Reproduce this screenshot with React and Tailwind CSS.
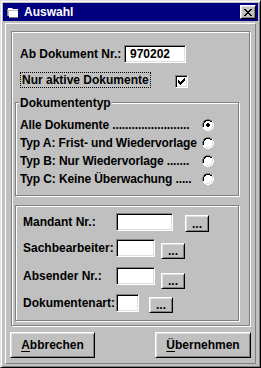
import React from "react";

const etched = "border border-[#808080] shadow-[inset_1px_1px_0_#fff,1px_1px_0_#fff]";
const sunken =
  "bg-white border border-t-[#808080] border-l-[#808080] border-b-white border-r-white shadow-[inset_1px_1px_0_#000,inset_-1px_-1px_0_#dfdfdf]";
const raised =
  "bg-[#c0c0c0] border border-t-white border-l-white border-b-black border-r-black shadow-[inset_1px_1px_0_#dfdfdf,inset_-1px_-1px_0_#808080]";

function Radio({ checked }) {
  return (
    <svg width="12" height="12" viewBox="0 0 12 12" className="block">
      <path d="M4 0h4v1h2v1h1v2h1v4h-1v2h-1v1h-2v1h-4v-1h-2v-1h-1v-2h-1v-4h1v-2h1v-1h2z" fill="#fff" />
      <path d="M4 0h4v1h2v1h-2v-1h-4v1h-2v2h-1v4h-1v-4h1v-2h1v-1h2z" fill="#808080" />
      <path d="M4 1h4v1h2v1h-2v-1h-4v1h-1v1h-1v4h-1v-4h1v-2h1v-1h1z" fill="#000" />
      <path d="M10 3h1v5h-1v2h-2v1h-4v-1h4v-1h1v-1h1z" fill="#dfdfdf" />
      <path d="M11 4h1v4h-1v2h-1v1h-2v1h-4v-1h4v-1h2v-2h1z" fill="#fff" />
      {checked && <path d="M5 4h2v1h1v2h-1v1h-2v-1h-1v-2h1z" fill="#000" />}
    </svg>
  );
}

function Dots({ className = "" }) {
  return (
    <div className={`${raised} w-[24px] flex items-end justify-center leading-[12px] pb-[1px] ${className}`}>
      <span className="-mt-[4px]">...</span>
    </div>
  );
}

export default function App() {
  return (
    <div className="w-[261px] h-[368px] bg-[#c0c0c0] border border-t-[#dfdfdf] border-l-[#dfdfdf] border-b-black border-r-black shadow-[inset_1px_1px_0_#fff,inset_-1px_-1px_0_#808080] p-[2px] flex flex-col font-['Liberation_Sans',Arial,sans-serif] font-bold text-[12px] leading-[14px] text-black">
      {/* Title bar */}
      <div className="h-[18px] bg-[#000080] flex items-center text-white shrink-0">
        <svg width="16" height="16" viewBox="0 0 16 16" className="ml-[2px] block">
          <path d="M3 5h4l1 1h5v6h-10z" fill="#c0c0c0" />
          <path d="M3 4h4l1 1h5v1h-10z" fill="#fff" />
          <path d="M4 7h9v6h-9z" fill="#fff" />
          <path d="M2 5h1v7h-1z" fill="#808080" />
          <path d="M4 13h9v1h-9z" fill="#808080" />
        </svg>
        <span className="ml-[3px]">Auswahl</span>
        <div className={`${raised} ml-auto mr-[2px] w-[16px] h-[14px] flex items-center justify-center`}>
          <svg width="8" height="7" viewBox="0 0 8 7" className="block">
            <path d="M0 0h2v1h1v1h2v-1h1v-1h2v1h-1v1h-1v1h-1v1h1v1h1v1h1v1h-2v-1h-1v-1h-2v1h-1v1h-2v-1h1v-1h1v-1h1v-1h-1v-1h-1v-1h-1z" fill="#000" />
          </svg>
        </div>
      </div>

      {/* Client panel */}
      <div className="mx-[2px] mt-[2px] mb-[1px] flex-1 border border-t-white border-l-white border-b-[#808080] border-r-[#808080] flex flex-col">
        {/* Outer box */}
        <div className={`${etched} ml-[5px] mt-[7px] w-[239px] h-[295px] flex flex-col shrink-0`}>
          {/* Ab Dokument Nr */}
          <div className="mt-[13px] h-[18px] flex items-center">
            <span className="pl-[8px] w-[112px] whitespace-nowrap">Ab Dokument Nr.:</span>
            <div className={`${sunken} w-[62px] h-[18px] flex items-center pl-[5px]`}>970202</div>
          </div>
          {/* Nur aktive */}
          <div className="mt-[9px] h-[16px] flex items-start">
            <span className="ml-[8px] border border-dotted border-black h-[16px] w-[131px] pl-[1px] whitespace-nowrap leading-[14px]">
              Nur aktive Dokumente
            </span>
            <div className={`${sunken} ml-[24px] mt-[3px] w-[13px] h-[13px] flex items-center justify-center`}>
              <svg width="7" height="7" viewBox="0 0 7 7" className="block">
                <path d="M6 0h1v3h-1v1h-1v1h-1v1h-1v1h-1v-1h-1v-1h-1v-3h1v1h1v1h1v-1h1v-1h1v-1h1z" fill="#000" />
              </svg>
            </div>
          </div>

          {/* Dokumententyp */}
          <div className={`${etched} mt-[14px] ml-[3px] w-[224px] h-[94px] flex flex-col`}>
            <div className="-mt-[7px] h-[14px] ml-[3px] px-[1px] bg-[#c0c0c0] w-fit whitespace-nowrap">Dokumententyp</div>
            <div className="mt-[6px] flex flex-col">
              {[
                ["Alle Dokumente ........................", true],
                ["Typ A: Frist- und Wiedervorlage", false],
                ["Typ B: Nur Wiedervorlage .......", false],
                ["Typ C: Keine Überwachung .....", false],
              ].map(([t, c]) => (
                <div key={t} className="h-[18px] flex items-center">
                  <span className="pl-[4px] w-[186px] whitespace-nowrap overflow-hidden tracking-[-0.12px]">{t}</span>
                  <Radio checked={c} />
                </div>
              ))}
            </div>
          </div>

          {/* Filter group */}
          <div className={`${etched} mt-[9px] ml-[3px] w-[224px] h-[116px] flex flex-col`}>
            <div className="mt-[7px] h-[26px] flex items-start">
              <span className="pl-[7px] w-[100px] h-[18px] flex items-center whitespace-nowrap">Mandant Nr.:</span>
              <div className={`${sunken} w-[57px] h-[18px]`} />
              <Dots className="ml-[12px] mt-[2px] h-[17px]" />
            </div>
            <div className="h-[28px] flex items-start">
              <span className="pl-[7px] w-[100px] h-[18px] flex items-center whitespace-nowrap">Sachbearbeiter:</span>
              <div className={`${sunken} w-[39px] h-[18px]`} />
              <Dots className="ml-[6px] mt-[4px] h-[16px]" />
            </div>
            <div className="h-[27px] flex items-start">
              <span className="pl-[7px] w-[100px] h-[18px] flex items-center whitespace-nowrap">Absender Nr.:</span>
              <div className={`${sunken} w-[39px] h-[18px]`} />
              <Dots className="ml-[6px] mt-[6px] h-[16px]" />
            </div>
            <div className="flex items-start">
              <span className="pl-[7px] w-[100px] h-[18px] flex items-center whitespace-nowrap">Dokumentenart:</span>
              <div className={`${sunken} w-[23px] h-[18px]`} />
              <Dots className="ml-[10px] mt-[3px] h-[16px]" />
            </div>
          </div>
        </div>

        {/* Buttons */}
        <div className="mt-[6px] flex">
          <div className={`${raised} ml-[4px] w-[85px] h-[26px] flex items-center justify-center`}>
            <span><span className="underline underline-offset-[2px]">A</span>bbrechen</span>
          </div>
          <div className={`${raised} ml-[60px] w-[96px] h-[26px] flex items-center justify-center`}>
            <span><span className="underline underline-offset-[2px]">Ü</span>bernehmen</span>
          </div>
        </div>
      </div>
    </div>
  );
}
